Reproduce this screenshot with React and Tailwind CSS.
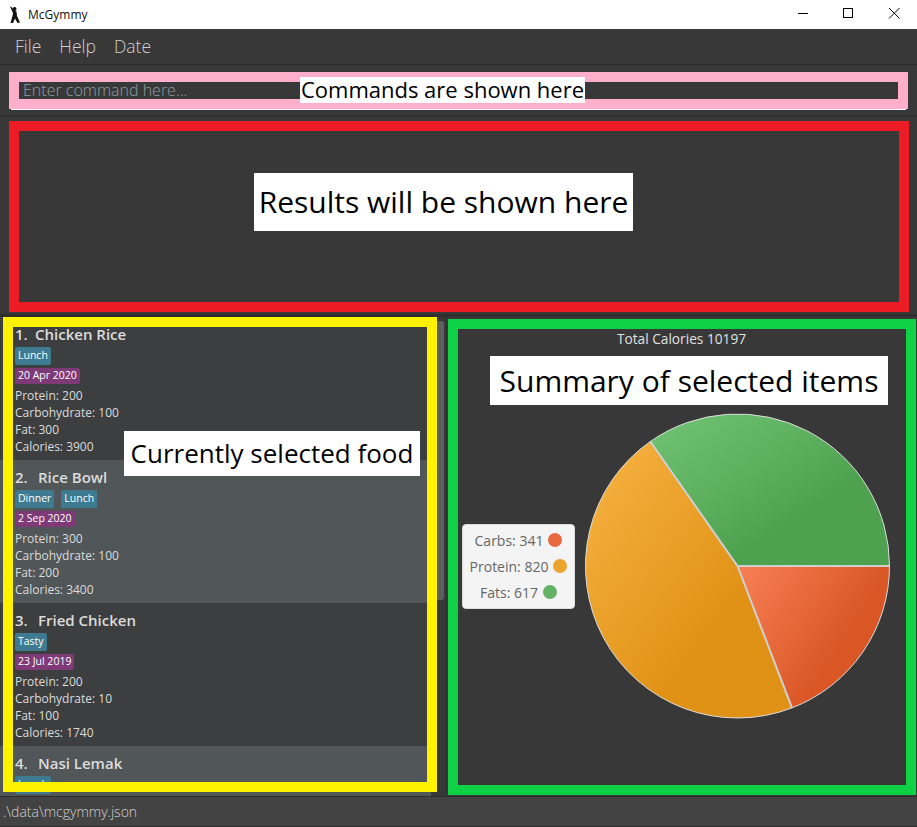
import React from "react";

const FONT = "font-['Open_Sans','Noto_Sans',sans-serif]";

const foods = [
    { id: 1, name: "Chicken Rice", tags: ["Lunch"], date: "20 Apr 2020", protein: 200, carbs: 100, fat: 300, calories: 3900 },
    { id: 2, name: "Rice Bowl", tags: ["Dinner", "Lunch"], date: "2 Sep 2020", protein: 300, carbs: 100, fat: 200, calories: 3400 },
    { id: 3, name: "Fried Chicken", tags: ["Tasty"], date: "23 Jul 2019", protein: 200, carbs: 10, fat: 100, calories: 1740 },
    // only the name and the top of the tag are in view, the rest is below the fold
    { id: 4, name: "Nasi Lemak", tags: ["Lunch"] },
];

const legend = [
    { label: "Carbs: 341", dot: "bg-[#e8693f]" },
    { label: "Protein: 820", dot: "bg-[#eba52f]" },
    { label: "Fats: 617", dot: "bg-[#63b266]" },
];

const FoodCard = ({ food, index }) => (
    <div className={`h-[143px] shrink-0 overflow-hidden pl-[15px] ${index % 2 ? "bg-[#515658]" : "bg-[#3c3e3f]"}`}>
        <div className="flex h-[30px] items-end pb-[3px] text-[15px] font-semibold leading-5 text-[#dcdcdc]">
            <span className={food.id === 1 ? "w-[20px]" : "w-[23px]"}>{food.id}.</span>
            <span>{food.name}</span>
        </div>
        <div className="flex gap-[7px]">
            {food.tags.map((tag) => (
                <span key={tag} className="flex h-[18px] items-center rounded-[2px] bg-[#3e7b91] px-[3px] text-[10.5px] text-white">{tag}</span>
            ))}
        </div>
        {food.date && (
            <>
                <div className="mt-[3px] flex">
                    <span className="flex h-4 items-center rounded-[2px] bg-[#7d3a76] px-[3px] text-[10.5px] text-white">{food.date}</span>
                </div>
                <div className="mt-[3px] text-[12px] leading-[17px] text-[#dcdcdc]">
                    <p>Protein: {food.protein}</p>
                    <p>Carbohydrate: {food.carbs}</p>
                    <p>Fat: {food.fat}</p>
                    <p>Calories: {food.calories}</p>
                </div>
            </>
        )}
    </div>
);

const PieChart = () => (
    <svg width="307" height="306" viewBox="0 0 307 306" className="shrink-0">
        <defs>
            <linearGradient id="green" x1="0" y1="0" x2="1" y2="1">
                <stop offset="0" stopColor="#70c474" />
                <stop offset="0.65" stopColor="#4ea24f" />
            </linearGradient>
            <linearGradient id="orange" x1="0" y1="0" x2="1" y2="1">
                <stop offset="0" stopColor="#f8b444" />
                <stop offset="0.65" stopColor="#e09216" />
            </linearGradient>
            <linearGradient id="red" x1="0" y1="0" x2="1" y2="0.6">
                <stop offset="0" stopColor="#f88056" />
                <stop offset="0.75" stopColor="#da5725" />
            </linearGradient>
        </defs>
        <g stroke="#dcdcdc" strokeWidth="1" strokeLinejoin="round">
            <path fill="url(#green)" d="M153.5 153 L66.3 28.5 A152 152 0 0 1 305.5 153 Z" />
            <path fill="url(#orange)" d="M153.5 153 L208 294.9 A152 152 0 0 1 66.3 28.5 Z" />
            <path fill="url(#red)" d="M153.5 153 L305.5 153 A152 152 0 0 1 208 294.9 Z" />
        </g>
        <path d="M66.3 28.5 L153.5 153 L305.5 153 M153.5 153 L208 294.9" fill="none" stroke="#cfcfcf" strokeWidth="2" />
    </svg>
);

const Label = ({ className, children }) => (
    <div className={`absolute flex items-center justify-center whitespace-nowrap bg-white text-black ${className}`}>{children}</div>
);

const App = () => {
    return (
        <div className={`relative flex h-[827px] w-[917px] flex-col overflow-hidden bg-[#383838] ${FONT}`}>
            {/* title bar */}
            <div className="flex h-[29px] shrink-0 items-center bg-white pl-[9px]">
                <svg width="14" height="18" viewBox="0 0 14 18" className="mr-[5px]">
                    <circle cx="5.5" cy="3" r="2" fill="#111" />
                    <path d="M1 0.5 L2.5 1 L5 4.5 L7.5 5.5 L8 10 L11 16.5 L8.5 17 L6 12.5 L4 17 L1.5 17 L3.5 10 L4 7 Z" fill="#111" />
                </svg>
                <span className="text-[12px] text-[#111]">McGymmy</span>
                <div className="ml-auto flex">
                    <svg width="140" height="29" viewBox="0 0 140 29" fill="none" stroke="#000" strokeWidth="1">
                        <path d="M21 13.5 H31" />
                        <rect x="66.5" y="8.5" width="9" height="9" />
                        <path d="M112 8 L122.5 18.5 M122.5 8 L112 18.5" />
                    </svg>
                </div>
            </div>

            {/* menu bar */}
            <div className="flex h-[36px] shrink-0 items-center gap-[18px] border-b border-[#2a2a2a] pl-[15px] text-[17.5px] font-light text-[#d0d0d0]">
                <span>File</span>
                <span>Help</span>
                <span>Date</span>
            </div>

            {/* command box */}
            <div className="relative h-[52px] shrink-0 border-b-2 border-[#2e2e2e] pl-[9px] pr-[9px] pt-[7px]">
                <div className="h-[37px] border-[10px] border-[#ffafc9] bg-[#383838] pl-[4px] text-[16px] font-light leading-[17px] text-[#8f9ca1]">
                    Enter command here...
                </div>
                <div className="mx-[2px] h-px bg-white" />
                <Label className="left-[300px] top-[12px] h-[26px] w-[285px] pb-[2px] text-[22px]">Commands are shown here</Label>
            </div>

            {/* result box */}
            <div className="relative h-[200px] shrink-0 border-b-[3px] border-[#2e2e2e] pl-[9px] pr-[8px] pt-[4px]">
                <div className="h-[191px] border-[10px] border-[#ed1c24] bg-[#383838]" />
                <Label className="left-[254px] top-[56px] h-[58px] w-[379px] pb-[1px] text-[30px]">Results will be shown here</Label>
            </div>

            {/* food list and chart */}
            <div className="relative flex min-h-0 flex-1">
                <div className="flex w-[431px] shrink-0 flex-col overflow-hidden">
                    {foods.map((food, index) => (
                        <FoodCard key={food.id} food={food} index={index} />
                    ))}
                </div>
                <div className="w-[16px] shrink-0 border-r border-[#2e2e2e]">
                    <div className="mt-[4px] h-[279px] w-[13px] rounded-r-[3px] bg-[#5f5f5f]" />
                </div>
                <div className="relative min-w-0 flex-1 pt-[13px]">
                    <div className="ml-[-1px] text-center text-[13.7px] font-medium leading-[18px] text-[#e0e0e0]">Total Calories 10197</div>
                    <div className="flex items-center pl-[15px] pt-[65px]">
                        <div className="flex h-[85px] w-[113px] shrink-0 flex-col items-center justify-center gap-[9px] rounded-[4px] border border-[#dcdcdc] bg-[#f4f4f4] text-[14px] leading-[17px] text-[#666666]">
                            {legend.map((item) => (
                                <div key={item.label} className="flex items-center gap-[5px]">
                                    <span>{item.label}</span>
                                    <span className={`size-[14px] rounded-full ${item.dot}`} />
                                </div>
                            ))}
                        </div>
                        <div className="ml-[9px]">
                            <PieChart />
                        </div>
                    </div>
                </div>

                {/* annotation frames */}
                <div className="absolute left-[3px] top-0 h-[475px] w-[434px] border-[10px] border-[#fff200]" />
                <div className="absolute left-[448px] top-[2px] h-[476px] w-[468px] border-[10px] border-[#0ed145]" />
                <Label className="left-[124px] top-[114px] h-[45px] w-[296px] text-[26px]">Currently selected food</Label>
                <Label className="left-[490px] top-[39px] h-[49px] w-[398px] pb-[1px] text-[30px]">Summary of selected items</Label>
            </div>

            {/* status bar */}
            <div className="flex h-[31px] shrink-0 items-center border-y border-[#2e2e2e] bg-[#434343] pl-[3px] text-[14px] font-light text-[#d0d0d0]">
                .\data\mcgymmy.json
            </div>
        </div>
    );
};

export default App;
